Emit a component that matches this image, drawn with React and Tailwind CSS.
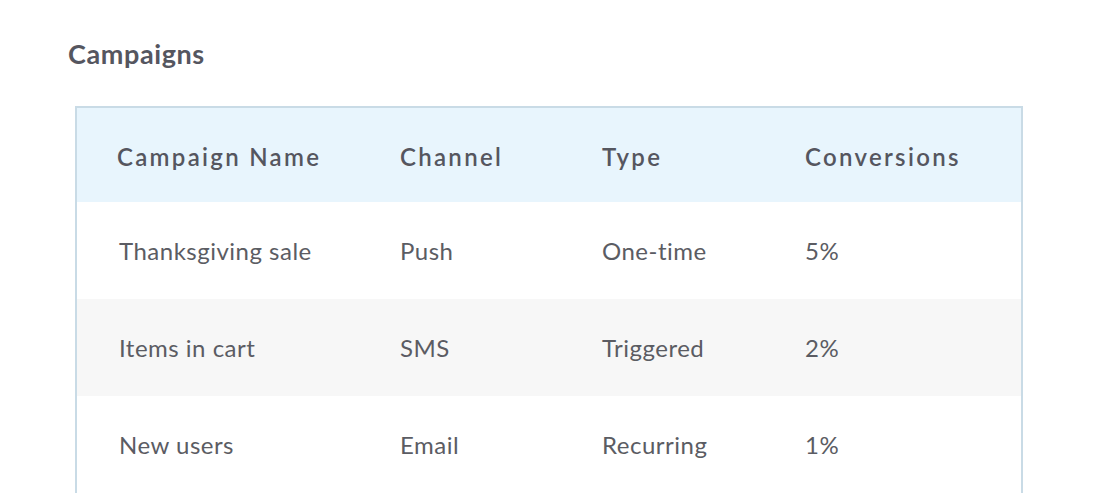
import React from "react";

const rows = [
  { name: "Thanksgiving sale", channel: "Push", type: "One-time", conv: "5%" },
  { name: "Items in cart", channel: "SMS", type: "Triggered", conv: "2%" },
  { name: "New users", channel: "Email", type: "Recurring", conv: "1%" },
];

const cols = "grid grid-cols-[283px_202px_203px_1fr] items-center pl-[40px]";

export default function App() {
  return (
    <div className="min-h-screen bg-white pl-[68px] pt-[36px] font-['Lato',sans-serif]">
      <h1 className="text-[27px] font-bold leading-[36px] tracking-[0.6px] text-[#55565f]">Campaigns</h1>
      <div className="mt-[34px] ml-[7px] w-[948px] border-x-2 border-t-2 border-[#c9dbe6]">
        <div className={`${cols} h-[94px] bg-[#e8f5fd] pt-[3px] text-[24px] font-semibold tracking-[2.3px] text-[#55565f]`}>
          <span>Campaign Name</span>
          <span>Channel</span>
          <span>Type</span>
          <span>Conversions</span>
        </div>
        {rows.map((r, i) => (
          <div
            key={r.name}
            className={`${cols} h-[97px] text-[24px] tracking-[0.5px] text-[#5b5c63] ${i % 2 === 1 ? "bg-[#f7f7f7]" : "bg-white"}`}
          >
            <span className="pl-[2px]">{r.name}</span>
            <span>{r.channel}</span>
            <span>{r.type}</span>
            <span>{r.conv}</span>
          </div>
        ))}
      </div>
    </div>
  );
}
